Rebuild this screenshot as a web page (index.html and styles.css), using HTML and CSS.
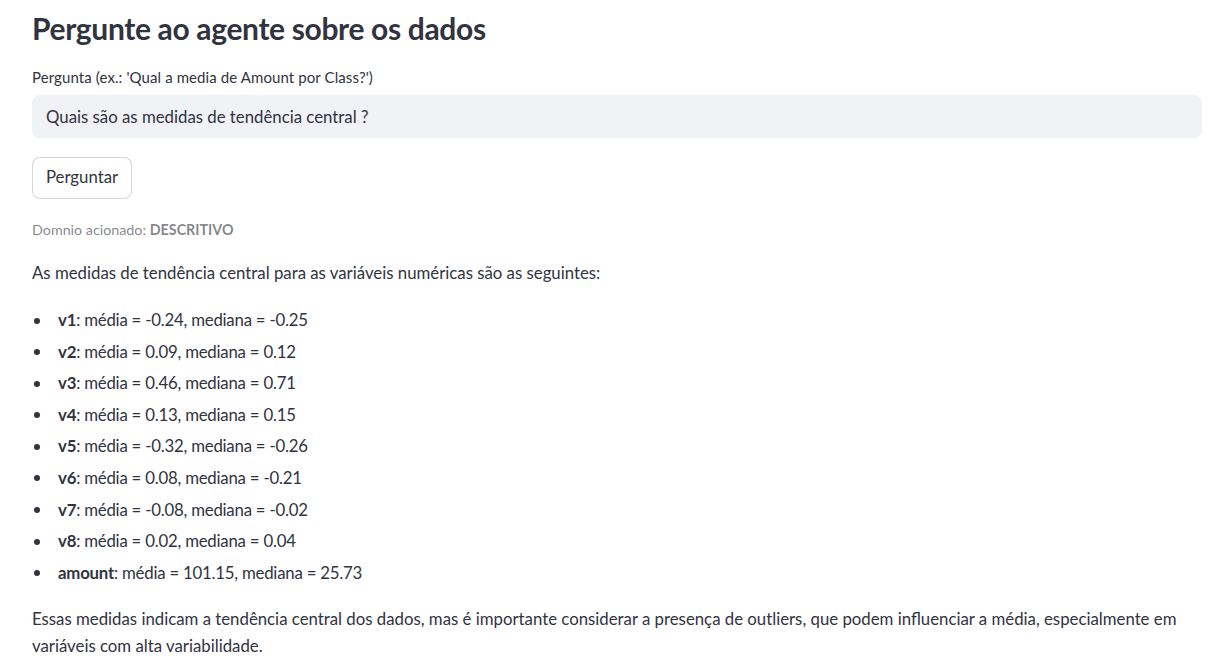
FILE: index.html
```html
<!DOCTYPE html>
<html lang="pt">
<head>
<meta charset="utf-8">
<title>Pergunte ao agente</title>
<link rel="stylesheet" href="styles.css">
</head>
<body>
<main class="block">
  <h2 class="title">Pergunte ao agente sobre os dados</h2>
  <label class="label" for="q">Pergunta (ex.: 'Qual a media de Amount por Class?')</label>
  <input id="q" class="input" type="text" value="Quais são as medidas de tendência central ?">
  <button class="btn" type="button">Perguntar</button>
  <p class="caption">Domnio acionado: <strong>DESCRITIVO</strong></p>
  <p class="para">As medidas de tendência central para as variáveis numéricas são as seguintes:</p>
  <ul class="list">
    <li><span><strong>v1</strong>: média = -0.24, mediana = -0.25</span></li>
    <li><span><strong>v2</strong>: média = 0.09, mediana = 0.12</span></li>
    <li><span><strong>v3</strong>: média = 0.46, mediana = 0.71</span></li>
    <li><span><strong>v4</strong>: média = 0.13, mediana = 0.15</span></li>
    <li><span><strong>v5</strong>: média = -0.32, mediana = -0.26</span></li>
    <li><span><strong>v6</strong>: média = 0.08, mediana = -0.21</span></li>
    <li><span><strong>v7</strong>: média = -0.08, mediana = -0.02</span></li>
    <li><span><strong>v8</strong>: média = 0.02, mediana = 0.04</span></li>
    <li><span><strong>amount</strong>: média = 101.15, mediana = 25.73</span></li>
  </ul>
  <p class="para para-last">Essas medidas indicam a tendência central dos dados, mas é importante considerar a presença de outliers, que podem influenciar a média, especialmente em variáveis com alta variabilidade.</p>
</main>
</body>
</html>
```

FILE: styles.css
```css
html, body {
  margin: 0;
  padding: 0;
  background: #ffffff;
}

body {
  font-family: Lato, "Noto Sans", sans-serif;
  color: #31333f;
  font-size: 16.8px;
}

.block {
  width: 1170px;
  padding-left: 32px;
  display: flex;
  flex-direction: column;
  align-items: flex-start;
}

.title {
  margin: 0;
  padding-top: 8px;
  font-size: 30px;
  letter-spacing: -0.35px;
  line-height: 40px;
  font-weight: 700;
  color: #31333f;
}

.label {
  margin-top: 18px;
  font-size: 15px;
  letter-spacing: 0.1px;
  line-height: 22px;
}

.input {
  box-sizing: border-box;
  margin-top: 7px;
  width: 1170px;
  height: 43px;
  border: none;
  border-radius: 8px;
  background: #f0f2f6;
  padding: 0 14px;
  font-family: inherit;
  font-size: 16.8px;
  color: #31333f;
  outline: none;
}

.btn {
  box-sizing: border-box;
  margin-top: 19px;
  width: 100px;
  height: 42px;
  background: #ffffff;
  border: 1px solid rgba(49, 51, 63, 0.2);
  border-radius: 8px;
  font-family: inherit;
  font-size: 16.8px;
  color: #31333f;
  padding: 0 0 3px;
}

.caption {
  margin: 20px 0 0;
  font-size: 14.3px;
  line-height: 22px;
  color: rgba(49, 51, 63, 0.6);
}

.caption strong {
  font-weight: 700;
}

.para {
  margin: 19px 0 0;
  line-height: 26px;
}

.list {
  margin: 21px 0 0;
  padding: 0;
  list-style: none;
}

.list li {
  display: flex;
  align-items: center;
  height: 26px;
  line-height: 26px;
  margin-bottom: 5.6px;
  letter-spacing: -0.22px;
}

.list li::before {
  content: "";
  width: 6px;
  height: 6px;
  border-radius: 50%;
  background: #31333f;
  margin: 1px 18px 0 2px;
  flex: none;
}

.list strong {
  font-weight: 700;
}

.para-last {
  margin-top: 14px;
  line-height: 27px;
}
```
